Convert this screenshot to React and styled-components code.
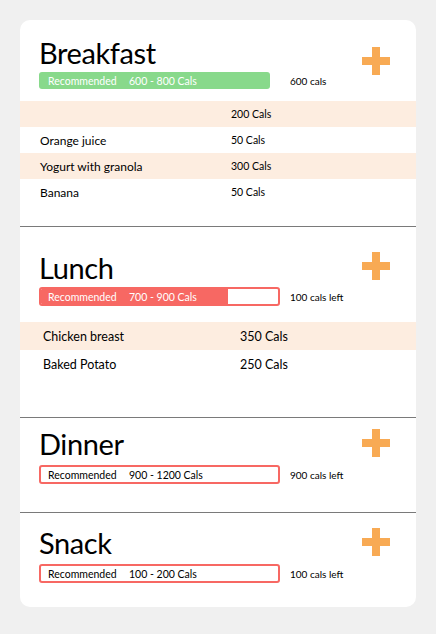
import React from "react";
import styled, { createGlobalStyle } from "styled-components";

const Global = createGlobalStyle`
  html, body { margin: 0; padding: 0; background: #f0f0f0; }
  body { font-family: Lato, "Open Sans", sans-serif; color: #111; }
`;

const Page = styled.div`
  padding: 20px;
`;

const Card = styled.div`
  width: 396px;
  height: 587px;
  background: #fff;
  border-radius: 10px;
  overflow: hidden;
  display: flex;
  flex-direction: column;
`;

const Section = styled.section`
  padding-top: ${(p) => p.$padTop}px;
  padding-bottom: ${(p) => p.$padBottom}px;
  border-bottom: ${(p) => (p.$last ? "none" : "1px solid #7a7a7a")};
`;

const Header = styled.div`
  display: flex;
  justify-content: space-between;
  align-items: flex-start;
  padding: 0 26px 0 19px;
`;

const HeadLeft = styled.div`
  display: flex;
  flex-direction: column;
  gap: ${(p) => p.$gap}px;
`;

const Title = styled.h2`
  margin: 0;
  font-family: Lato, sans-serif;
  font-weight: 400;
  font-size: 29px;
  line-height: 29px;
  color: #000;
  letter-spacing: -0.4px;
`;

const BarRow = styled.div`
  display: grid;
  grid-template-columns: 251px auto;
  align-items: center;
`;

const Bar = styled.div`
  position: relative;
  box-sizing: border-box;
  width: ${(p) => p.$width}px;
  height: ${(p) => p.$height}px;
  border-radius: 3px;
  border: ${(p) => (p.$outline ? `2px solid ${p.$color}` : "none")};
  background: ${(p) => (p.$outline ? "#fff" : p.$color)};
  display: flex;
  align-items: center;
  padding-left: ${(p) => (p.$outline ? 7 : 9)}px;
  overflow: hidden;
`;

const BarFill = styled.div`
  position: absolute;
  left: 0;
  top: 0;
  bottom: 0;
  background: ${(p) => p.$color};
`;

const RecLabel = styled.span`
  position: relative;
  display: inline-block;
  width: 81px;
  font-size: 10.5px;
  color: ${(p) => (p.$light ? "#fff" : "#000")};
  white-space: nowrap;
`;

const RangeLabel = styled.span`
  position: relative;
  font-size: 10.5px;
  color: ${(p) => (p.$light ? "#fff" : "#000")};
  white-space: nowrap;
`;

const Status = styled.span`
  font-size: 10px;
  color: #000;
  white-space: nowrap;
`;

const Plus = styled.div`
  position: relative;
  width: 28px;
  height: 28px;
  margin-top: ${(p) => p.$offset}px;
  flex: none;
  &::before, &::after {
    content: "";
    position: absolute;
    background: #f8aa54;
  }
  &::before { left: 0; right: 0; top: 10px; height: 8px; }
  &::after { top: 0; bottom: 0; left: 10px; width: 8px; }
`;

const Rows = styled.div`
  margin-top: ${(p) => p.$gap}px;
`;

const Row = styled.div`
  display: grid;
  grid-template-columns: ${(p) => p.$col}px 1fr;
  align-items: center;
  height: ${(p) => p.$h}px;
  padding-left: ${(p) => p.$pad}px;
  &:nth-child(odd) { background: #fdede0; }
`;

const FoodName = styled.span`
  font-size: ${(p) => p.$size}px;
  color: #000;
`;

const FoodCals = styled.span`
  font-size: ${(p) => p.$size}px;
  color: #000;
`;

const meals = [
  {
    title: "Breakfast",
    padTop: 18, padBottom: 21, barGap: 5, plus: 9,
    bar: { width: 231, height: 17, color: "#88d98b", outline: false, light: true },
    range: "600 - 800 Cals",
    status: "600 cals",
    rows: { gap: 12, h: 26, col: 191, pad: 20, name: 12, cals: 10.5 },
    foods: [["", "200 Cals"], ["Orange juice", "50 Cals"], ["Yogurt with granola", "300 Cals"], ["Banana", "50 Cals"]],
  },
  {
    title: "Lunch",
    padTop: 26, padBottom: 39, barGap: 5, plus: -1,
    bar: { width: 241, height: 19, color: "#f76863", outline: true, light: true, fill: 0.79 },
    range: "700 - 900 Cals",
    status: "100 cals left",
    rows: { gap: 16, h: 28, col: 197, pad: 23, name: 12.5, cals: 12.5 },
    foods: [["Chicken breast", "350 Cals"], ["Baked Potato", "250 Cals"]],
  },
  {
    title: "Dinner",
    padTop: 11, padBottom: 28, barGap: 7, plus: 0,
    bar: { width: 241, height: 19, color: "#f76863", outline: true, light: false },
    range: "900 - 1200 Cals",
    status: "900 cals left",
    foods: [],
  },
  {
    title: "Snack",
    padTop: 15, padBottom: 24, barGap: 7, plus: 0,
    bar: { width: 241, height: 19, color: "#f76863", outline: true, light: false },
    range: "100 - 200 Cals",
    status: "100 cals left",
    foods: [],
  },
];

function Meal({ meal, last }) {
  const { bar } = meal;
  return (
    <Section $padTop={meal.padTop} $padBottom={meal.padBottom} $last={last}>
      <Header>
        <HeadLeft $gap={meal.barGap}>
          <Title>{meal.title}</Title>
          <BarRow>
            <Bar $width={bar.width} $height={bar.height} $color={bar.color} $outline={bar.outline}>
              {bar.fill ? <BarFill $color={bar.color} style={{ width: `${bar.fill * 100}%` }} /> : null}
              <RecLabel $light={bar.light}>Recommended</RecLabel>
              <RangeLabel $light={bar.light}>{meal.range}</RangeLabel>
            </Bar>
            <Status>{meal.status}</Status>
          </BarRow>
        </HeadLeft>
        <Plus $offset={meal.plus} />
      </Header>
      {meal.foods.length > 0 && (
        <Rows $gap={meal.rows.gap}>
          {meal.foods.map(([name, cals], i) => (
            <Row key={i} $h={meal.rows.h} $col={meal.rows.col} $pad={meal.rows.pad}>
              <FoodName $size={meal.rows.name}>{name}</FoodName>
              <FoodCals $size={meal.rows.cals}>{cals}</FoodCals>
            </Row>
          ))}
        </Rows>
      )}
    </Section>
  );
}

export default function App() {
  return (
    <>
      <Global />
      <Page>
        <Card>
          {meals.map((m, i) => (
            <Meal key={m.title} meal={m} last={i === meals.length - 1} />
          ))}
        </Card>
      </Page>
    </>
  );
}
